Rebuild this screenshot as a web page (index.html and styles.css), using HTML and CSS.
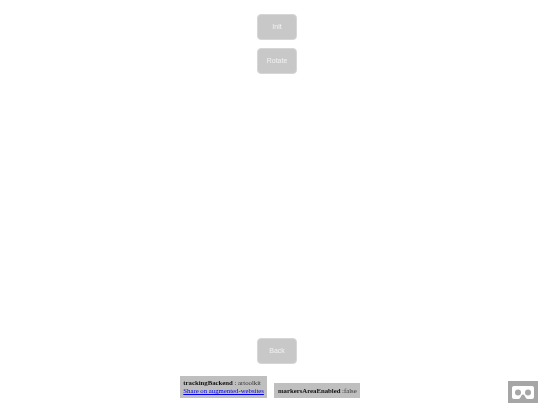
FILE: index.html
```html
<!DOCTYPE html>
<html lang="en">
<head>
    <meta charset="UTF-8">
    <title>Document</title>
    <link rel="stylesheet" href="styles.css">
</head>
<body>
    <div class="page">
        <div class="controls">
            <button class="btn">Init</button>
            <button class="btn">Rotate</button>
        </div>
        <div class="bottom">
            <button class="btn">Back</button>
            <div class="info-row">
                <div class="info">
                    <b>trackingBackend</b> : artoolkit<br>
                    <a href="#">Share on augmented-websites</a>
                </div>
                <div class="info single">
                    <b>markersAreaEnabled</b> :false
                </div>
            </div>
        </div>
    </div>
    <button class="vr" aria-label="Enter VR">
        <svg width="22" height="13" viewBox="0 0 22 13">
            <path fill="#fff" fill-rule="evenodd" d="M2 0H20C21.200 0 22 .8 22 2V11C22 12.200 21.200 13 20 13H15.500C14.500 13 14 12.400 13.600 11.600L12.400 9.200C11.900 8.200 10.100 8.200 9.600 9.200L8.400 11.600C8 12.400 7.500 13 6.500 13H2C.8 13 0 12.200 0 11V2C0 .8.800 0 2 0ZM6 3.500A3 3 0 1 0 6 9.500A3 3 0 1 0 6 3.500ZM16 3.500A3 3 0 1 0 16 9.500A3 3 0 1 0 16 3.500Z"/>
        </svg>
    </button>
</body>
</html>
```

FILE: styles.css
```css
*, *::before, *::after {
    box-sizing: border-box;
}
body {
    margin: 0;
    background-color: white;
    font-family: "Liberation Serif", serif;
}
.page {
    height: 405px;
    display: flex;
    flex-direction: column;
    justify-content: space-between;
    overflow: hidden;
    filter: blur(.4px);
}
.controls {
    display: flex;
    flex-direction: column;
    align-items: center;
    gap: 8px;
    padding-top: 14px;
    padding-left: 14px;
}
.bottom {
    display: flex;
    flex-direction: column;
    align-items: center;
    gap: 12px;
    padding-bottom: 7px;
}
.bottom .btn {
    margin-left: 14px;
}
.btn {
    width: 40px;
    height: 26px;
    padding: 0 0 1px;
    border: 1px solid #d6d6d6;
    border-radius: 4px;
    background-color: #c8c8c8;
    color: #f2f2f2;
    font-family: "Liberation Sans", sans-serif;
    font-size: 7px;
}
.info-row {
    display: flex;
    align-items: flex-end;
    gap: 7px;
}
.info {
    padding: 3px 3.500px;
    background-color: #bfbfbf;
    color: #333;
    font-size: 6.750px;
    line-height: 8px;
    white-space: nowrap;
}
.info.single {
    padding-top: 4px;
}
.info b {
    color: #111;
}
.info a {
    color: #0000ee;
}
.vr {
    position: absolute;
    left: 508px;
    top: 381px;
    width: 30px;
    height: 22px;
    padding: 0;
    border: none;
    background-color: #a6a6a6;
    display: flex;
    align-items: center;
    justify-content: center;
}
```
